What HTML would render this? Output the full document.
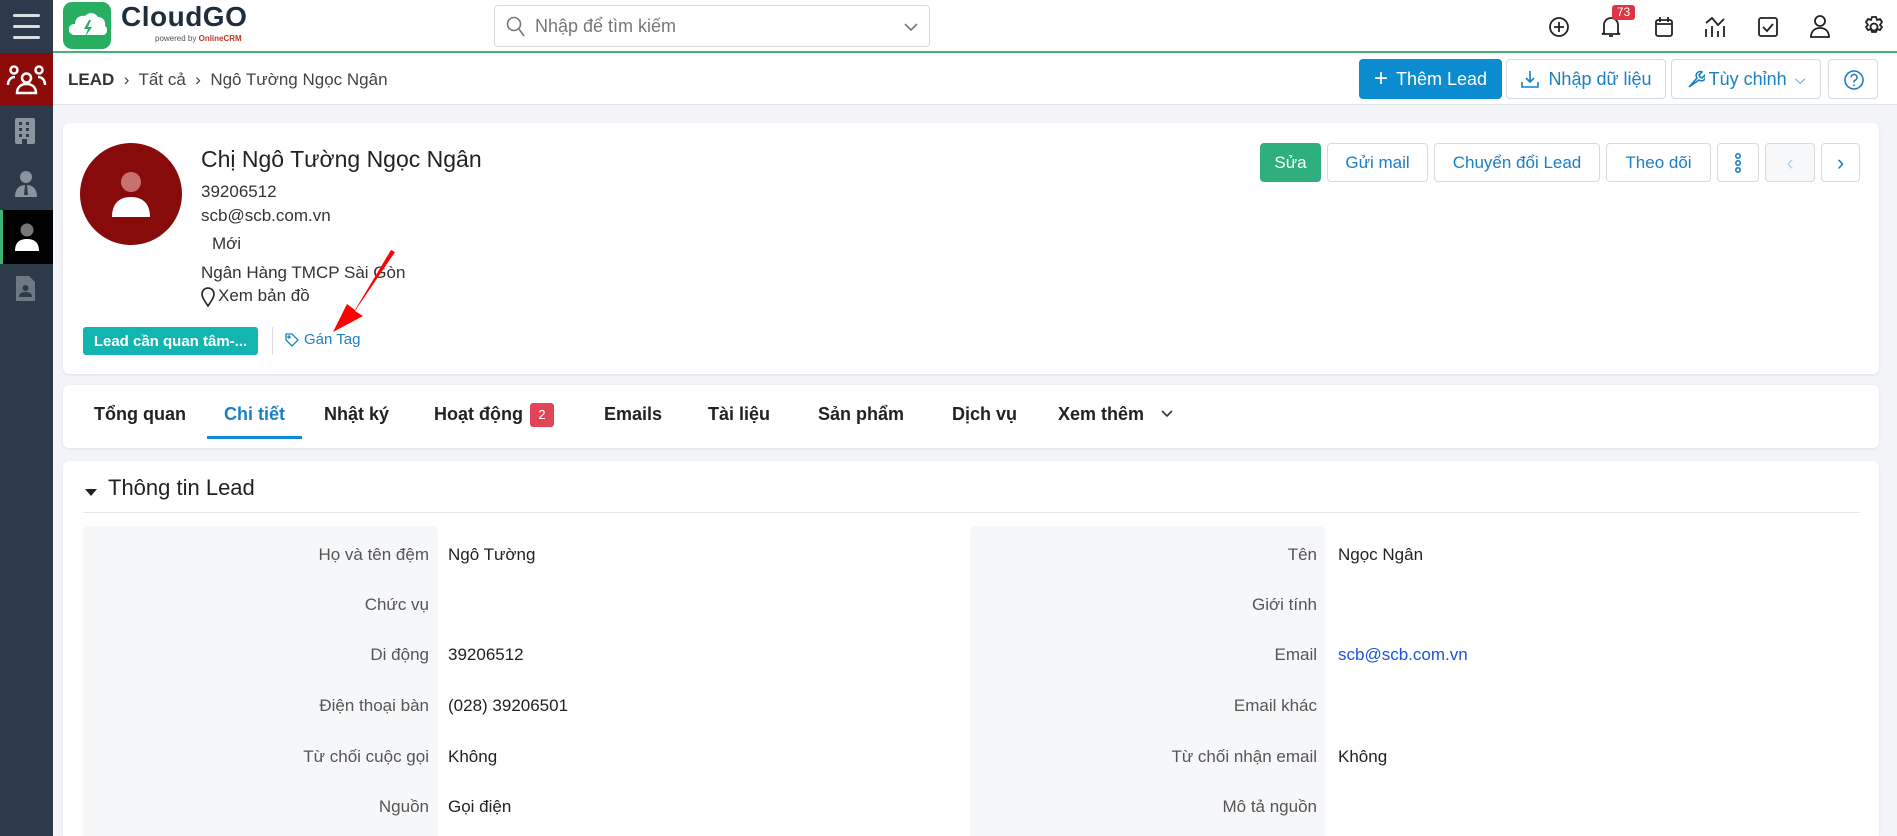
<!DOCTYPE html>
<html><head><meta charset="utf-8"><style>
*{box-sizing:border-box;margin:0;padding:0}
html,body{width:1897px;height:836px;overflow:hidden}
body{background:#f2f4f7;font-family:"Liberation Sans","DejaVu Sans",sans-serif;color:#222;position:relative}
.abs{position:absolute}
.side{left:0;top:0;width:53px;height:836px;background:#2c3a4a}
.top{left:53px;top:0;width:1844px;height:53px;background:#fff;border-bottom:2px solid #4caf7a}
.bc{left:53px;top:54px;width:1844px;height:51px;background:#fff;border-bottom:1px solid #dde1e5}
.card{background:#fff;border-radius:6px;box-shadow:0 1px 3px rgba(0,0,0,.08)}
.btn{position:absolute;border:1px solid #d6dbe0;border-radius:4px;background:#fff;color:#1a7fc4;font-size:17px;display:flex;align-items:center;justify-content:center;top:143px;height:39px}
.tb{position:absolute;top:404px;font-size:18px;color:#222;font-weight:bold}
.lab{position:absolute;font-size:17px;color:#555;text-align:right}
.val{position:absolute;font-size:17px;color:#222}
svg{display:block}
</style></head><body>
<div class="abs side">
 <div class="abs" style="left:13px;top:14px;width:27px;height:3px;background:#d8dde2;border-radius:2px"></div>
 <div class="abs" style="left:13px;top:25px;width:27px;height:3px;background:#d8dde2;border-radius:2px"></div>
 <div class="abs" style="left:13px;top:36px;width:27px;height:3px;background:#d8dde2;border-radius:2px"></div>
 <div class="abs" style="left:0;top:53px;width:53px;height:53px;background:#8b0a0a">
  <svg width="53" height="53" viewBox="0 0 53 53" fill="none" stroke="#fff" stroke-width="2.5"><circle cx="14" cy="17" r="3.5"/><circle cx="39" cy="17" r="3.5"/><circle cx="26.5" cy="25" r="4.5"/><path d="M8 32c0-5 3-8 7-8M45 32c0-5-3-8-7-8M17 40c0-6 4-9 9.5-9s9.5 3 9.5 9z"/></svg>
 </div>
 <svg class="abs" style="left:14px;top:117px" width="22" height="28" viewBox="0 0 22 28"><rect x="1" y="1" width="20" height="26" rx="2" fill="#8a949e"/><g fill="#2c3a4a"><rect x="5" y="5" width="3" height="3"/><rect x="12" y="5" width="3" height="3"/><rect x="5" y="11" width="3" height="3"/><rect x="12" y="11" width="3" height="3"/><rect x="5" y="17" width="3" height="3"/><rect x="12" y="17" width="3" height="3"/><rect x="8" y="22" width="5" height="6"/></g></svg>
 <svg class="abs" style="left:14px;top:170px" width="24" height="28" viewBox="0 0 24 28" fill="#8a949e"><circle cx="12" cy="7" r="6"/><path d="M1 27c0-8 4-12 11-12s11 4 11 12z"/><path d="M11 15h2l1 10h-4z" fill="#2c3a4a"/></svg>
 <div class="abs" style="left:0;top:210px;width:53px;height:54px;background:#000;border-left:3px solid #3cb371">
  <svg class="abs" style="left:11px;top:13px" width="26" height="28" viewBox="0 0 26 28"><circle cx="13" cy="7" r="6.5" fill="#777"/><path d="M1 28c0-9 5-12 12-12s12 3 12 12z" fill="#fff"/></svg>
 </div>
 <svg class="abs" style="left:15px;top:275px" width="21" height="27" viewBox="0 0 21 27"><path d="M1 1h13l6 6v19H1z" fill="#6c7884"/><circle cx="10.5" cy="13" r="3" fill="#2c3a4a"/><path d="M4 22c0-4 3-5 6.5-5s6.5 1 6.5 5z" fill="#2c3a4a"/></svg>
</div>

<div class="abs top">
 <div class="abs" style="left:10px;top:2px;width:48px;height:47px;background:#27ae60;border-radius:9px">
  <svg width="48" height="47" viewBox="0 0 48 47"><path d="M12 33c-5 0-7-4-6-7 1-3 3-4 6-4 0-6 5-9 10-8 3-4 10-4 13 1 5 0 8 4 7 9 3 1 3 9-2 9z" fill="#fff"/><path d="M26 18l-5 9h4l-3 8 7-10h-4l3-7z" fill="#27ae60"/></svg>
 </div>
 <div class="abs" style="left:68px;top:1px;font-size:28px;font-weight:bold;color:#1f2d3d;letter-spacing:.5px">CloudGO</div>
 <div class="abs" style="left:102px;top:34px;font-size:8px;color:#555">powered by <b style="color:#c0392b">OnlineCRM</b></div>
 <div class="abs" style="left:441px;top:5px;width:436px;height:42px;border:1px solid #d8dde2;border-radius:4px">
  <svg class="abs" style="left:11px;top:10px" width="20" height="22" viewBox="0 0 20 22" fill="none" stroke="#777" stroke-width="1.6"><circle cx="8" cy="8" r="6.5"/><path d="M13 13l5 7"/></svg>
  <div class="abs" style="left:40px;top:10px;font-size:18px;color:#777">Nhập để tìm kiếm</div>
  <svg class="abs" style="left:408px;top:15px" width="16" height="12" viewBox="0 0 16 12" fill="none" stroke="#777" stroke-width="1.6"><path d="M2 3l6 6 6-6"/></svg>
 </div>
 <svg class="abs" style="left:1495px;top:16px" width="22" height="22" viewBox="0 0 22 22" fill="none" stroke="#222" stroke-width="1.8"><circle cx="11" cy="11" r="9"/><path d="M11 6v10M6 11h10"/></svg>
 <svg class="abs" style="left:1547px;top:15px" width="22" height="24" viewBox="0 0 22 24" fill="none" stroke="#222" stroke-width="1.8"><path d="M4 18V10a7 7 0 0 1 14 0v8l2 1H2z"/><path d="M9 21h4"/></svg>
 <div class="abs" style="left:1559px;top:5px;width:23px;height:15px;background:#dc3545;color:#fff;font-size:12px;border-radius:3px;text-align:center;line-height:15px">73</div>
 <svg class="abs" style="left:1600px;top:16px" width="22" height="22" viewBox="0 0 22 22" fill="none" stroke="#222" stroke-width="1.8"><rect x="3" y="4" width="16" height="16" rx="2"/><path d="M3 8h16M7 1v5M15 1v5"/></svg>
 <svg class="abs" style="left:1651px;top:15px" width="24" height="24" viewBox="0 0 24 24" fill="none" stroke="#222" stroke-width="1.8"><path d="M2 22v-8M8 22v-11M14 22v-6M20 22v-11M2 8l6-5 6 7 6-6"/></svg>
 <svg class="abs" style="left:1704px;top:16px" width="22" height="22" viewBox="0 0 22 22" fill="none" stroke="#222" stroke-width="1.8"><rect x="2" y="2" width="18" height="18" rx="2"/><path d="M6 11l4 4 6-7"/></svg>
 <svg class="abs" style="left:1756px;top:14px" width="22" height="25" viewBox="0 0 22 25" fill="none" stroke="#222" stroke-width="1.8"><circle cx="11" cy="7" r="5"/><path d="M2 23c0-6 4-9 9-9s9 3 9 9z"/></svg>
 <svg class="abs" style="left:1809px;top:15px" width="24" height="24" viewBox="0 0 24 24" fill="none" stroke="#222" stroke-width="1.8"><circle cx="12" cy="12" r="3.5"/><path d="M10 2h4l1 3 3-1 2 3-2 3 2 2-2 3-3-1-1 3h-4l-1-3-3 1-2-3 2-2-2-3 2-3 3 1z"/></svg>
</div>

<div class="abs bc">
 <div class="abs" style="left:15px;top:16px;font-size:17px;color:#444"><b style="color:#333">LEAD</b> &nbsp;›&nbsp; Tất cả &nbsp;›&nbsp; Ngô Tường Ngọc Ngân</div>
 <div class="abs" style="left:1306px;top:5px;width:143px;height:40px;background:#0b8bd0;border-radius:4px;color:#fff;font-size:18px;display:flex;align-items:center;justify-content:center"><span style="font-size:24px;margin-right:8px;font-weight:300">+</span>Thêm Lead</div>
 <div class="abs" style="left:1453px;top:5px;width:160px;height:40px;border:1px solid #d6dbe0;border-radius:4px;color:#1a7fc4;font-size:18px;display:flex;align-items:center;justify-content:center"><svg width="20" height="20" viewBox="0 0 20 20" fill="none" stroke="#1a7fc4" stroke-width="1.6" style="margin-right:8px"><path d="M10 2v11M6 9l4 4 4-4M2 13v5h16v-5"/></svg>Nhập dữ liệu</div>
 <div class="abs" style="left:1618px;top:5px;width:150px;height:40px;border:1px solid #d6dbe0;border-radius:4px;color:#1a7fc4;font-size:18px;display:flex;align-items:center;justify-content:center"><svg width="18" height="20" viewBox="0 0 18 20" fill="none" stroke="#1a7fc4" stroke-width="1.6" style="margin-right:4px"><path d="M2 18l8-9a4 4 0 0 1 5-6l-3 3 1 2 2 1 3-3a4 4 0 0 1-6 5z"/></svg>Tùy chỉnh <span style="margin-left:8px;font-size:14px">⌵</span></div>
 <div class="abs" style="left:1775px;top:5px;width:50px;height:40px;border:1px solid #d6dbe0;border-radius:4px"><svg class="abs" style="left:14px;top:9px" width="22" height="22" viewBox="0 0 22 22" fill="none" stroke="#1a7fc4" stroke-width="1.6"><circle cx="11" cy="11" r="9"/><path d="M8 8.5a3 3 0 1 1 4 2.8c-1 .4-1 1-1 2.2M11 15.5v1.5"/></svg></div>
</div>

<div class="abs card" style="left:63px;top:123px;width:1816px;height:251px"></div>
<div class="abs" style="left:80px;top:143px;width:102px;height:102px;border-radius:50%;background:#870b0b">
 <svg class="abs" style="left:30px;top:28px" width="42" height="46" viewBox="0 0 42 46"><circle cx="21" cy="11" r="10" fill="#c97070"/><path d="M2 46c0-14 8-20 19-20s19 6 19 20z" fill="#fff"/></svg>
</div>
<div class="abs" style="left:201px;top:146px;font-size:23px;color:#222">Chị Ngô Tường Ngọc Ngân</div>
<div class="abs" style="left:201px;top:182px;font-size:17px;color:#333">39206512</div>
<div class="abs" style="left:201px;top:206px;font-size:17px;color:#333">scb@scb.com.vn</div>
<div class="abs" style="left:212px;top:234px;font-size:17px;color:#333">Mới</div>
<div class="abs" style="left:201px;top:263px;font-size:17px;color:#333">Ngân Hàng TMCP Sài Gòn</div>
<svg class="abs" style="left:201px;top:287px" width="14" height="20" viewBox="0 0 14 20" fill="none" stroke="#222" stroke-width="1.6"><path d="M7 19C3 13 1 10 1 7a6 6 0 0 1 12 0c0 3-2 6-6 12z"/></svg>
<div class="abs" style="left:218px;top:286px;font-size:17px;color:#333">Xem bản đồ</div>
<div class="abs" style="left:83px;top:327px;width:175px;height:28px;background:#12b5b0;border-radius:3px;color:#fff;font-size:15px;font-weight:bold;display:flex;align-items:center;justify-content:center">Lead cần quan tâm-...</div>
<div class="abs" style="left:272px;top:327px;width:1px;height:28px;background:#ddd"></div>
<svg class="abs" style="left:285px;top:333px" width="14" height="14" viewBox="0 0 14 14" fill="none" stroke="#1a7fc4" stroke-width="1.3"><path d="M1 1h6l6 6-6 6-6-6z"/><circle cx="4" cy="4" r="1"/></svg>
<div class="abs" style="left:304px;top:331px;font-size:15px;color:#1a7fc4">Gán Tag</div>
<svg class="abs" style="left:325px;top:248px" width="72" height="86" viewBox="0 0 72 86"><path d="M66 2L30 62l-8-6L8 84 38 68l-8-5L70 4z" fill="#f00"/></svg>

<div class="btn" style="left:1260px;width:61px;background:#2eaf7d;border-color:#2eaf7d;color:#fff">Sửa</div>
<div class="btn" style="left:1327px;width:101px">Gửi mail</div>
<div class="btn" style="left:1434px;width:166px">Chuyển đổi Lead</div>
<div class="btn" style="left:1606px;width:105px">Theo dõi</div>
<div class="btn" style="left:1717px;width:42px"><svg width="8" height="22" viewBox="0 0 8 22" fill="none" stroke="#1a7fc4" stroke-width="1.6"><circle cx="4" cy="4" r="2.2"/><circle cx="4" cy="11" r="2.2"/><circle cx="4" cy="18" r="2.2"/></svg></div>
<div class="btn" style="left:1765px;width:50px;background:#f6f8fa;color:#b5d3ea;font-size:22px">‹</div>
<div class="btn" style="left:1821px;width:39px;font-size:22px">›</div>

<div class="abs card" style="left:63px;top:385px;width:1816px;height:63px"></div>
<div class="tb" style="left:94px">Tổng quan</div>
<div class="tb" style="left:224px;color:#1a7fc4">Chi tiết</div>
<div class="abs" style="left:207px;top:436px;width:95px;height:3px;background:#0b8bd0"></div>
<div class="tb" style="left:324px">Nhật ký</div>
<div class="tb" style="left:434px">Hoạt động</div>
<div class="abs" style="left:530px;top:403px;width:24px;height:24px;background:#e04558;border-radius:3px;color:#fff;font-size:13px;text-align:center;line-height:24px">2</div>
<div class="tb" style="left:604px">Emails</div>
<div class="tb" style="left:708px">Tài liệu</div>
<div class="tb" style="left:818px">Sản phẩm</div>
<div class="tb" style="left:952px">Dịch vụ</div>
<div class="tb" style="left:1058px">Xem thêm</div>
<svg class="abs" style="left:1160px;top:409px" width="14" height="10" viewBox="0 0 14 10" fill="none" stroke="#333" stroke-width="1.6"><path d="M2 2l5 5 5-5"/></svg>

<div class="abs card" style="left:63px;top:461px;width:1816px;height:375px;border-radius:6px 6px 0 0"></div>
<div class="abs" style="left:85px;top:489px;width:0;height:0;border-left:6px solid transparent;border-right:6px solid transparent;border-top:7px solid #222"></div>
<div class="abs" style="left:108px;top:475px;font-size:22px;color:#222">Thông tin Lead</div>
<div class="abs" style="left:83px;top:512px;width:1777px;height:1px;background:#e5e8eb"></div>
<div class="abs" style="left:83px;top:526px;width:355px;height:310px;background:#f6f7f9;border-radius:5px 5px 0 0"></div>
<div class="abs" style="left:970px;top:526px;width:355px;height:310px;background:#f6f7f9;border-radius:5px 5px 0 0"></div>

<div class="lab" style="left:150px;width:279px;top:545px">Họ và tên đệm</div><div class="val" style="left:448px;top:545px">Ngô Tường</div>
<div class="lab" style="left:150px;width:279px;top:595px">Chức vụ</div>
<div class="lab" style="left:150px;width:279px;top:645px">Di động</div><div class="val" style="left:448px;top:645px">39206512</div>
<div class="lab" style="left:150px;width:279px;top:696px">Điện thoại bàn</div><div class="val" style="left:448px;top:696px">(028) 39206501</div>
<div class="lab" style="left:150px;width:279px;top:747px">Từ chối cuộc gọi</div><div class="val" style="left:448px;top:747px">Không</div>
<div class="lab" style="left:150px;width:279px;top:797px">Nguồn</div><div class="val" style="left:448px;top:797px">Gọi điện</div>

<div class="lab" style="left:1000px;width:317px;top:545px">Tên</div><div class="val" style="left:1338px;top:545px">Ngọc Ngân</div>
<div class="lab" style="left:1000px;width:317px;top:595px">Giới tính</div>
<div class="lab" style="left:1000px;width:317px;top:645px">Email</div><div class="val" style="left:1338px;top:645px;color:#1a56d6">scb@scb.com.vn</div>
<div class="lab" style="left:1000px;width:317px;top:696px">Email khác</div>
<div class="lab" style="left:1000px;width:317px;top:747px">Từ chối nhận email</div><div class="val" style="left:1338px;top:747px">Không</div>
<div class="lab" style="left:1000px;width:317px;top:797px">Mô tả nguồn</div>
</body></html>
